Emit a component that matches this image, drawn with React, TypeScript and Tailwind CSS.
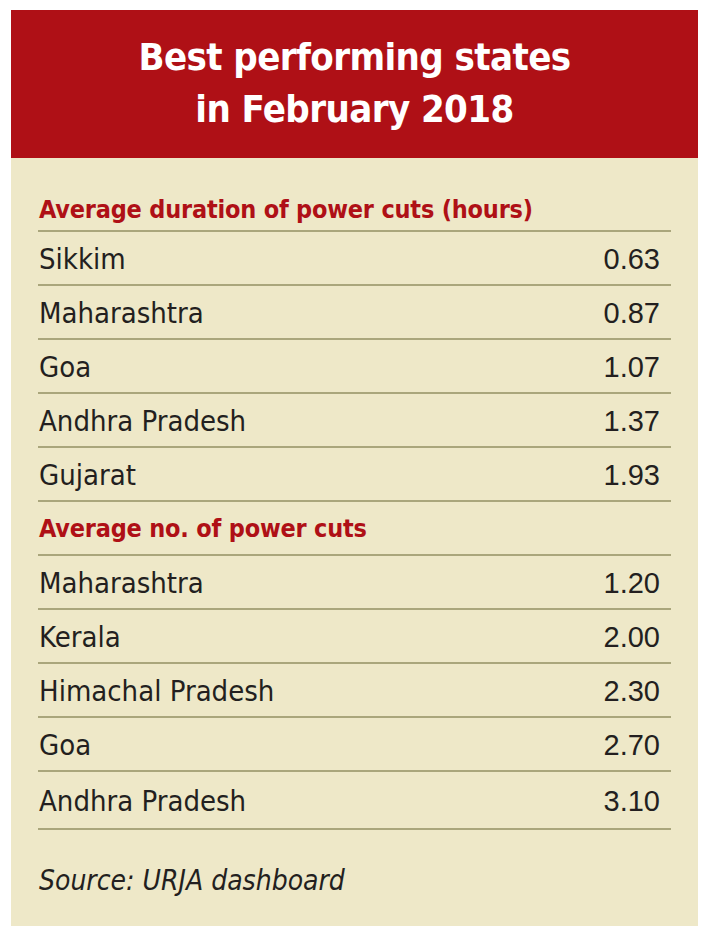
const duration = [
  ["Sikkim", "0.63"],
  ["Maharashtra", "0.87"],
  ["Goa", "1.07"],
  ["Andhra Pradesh", "1.37"],
  ["Gujarat", "1.93"],
];

const cuts = [
  ["Maharashtra", "1.20"],
  ["Kerala", "2.00"],
  ["Himachal Pradesh", "2.30"],
  ["Goa", "2.70"],
  ["Andhra Pradesh", "3.10"],
];

function Row({ name, value, last }: { name: string; value: string; last?: boolean }) {
  return (
    <div
      className={
        "flex items-center justify-between border-b-2 border-[#aaa67c] pl-[1px] pr-[11px] pt-[4px] text-[29px] text-[#231f20] " +
        (last ? "h-[58px]" : "h-[54px]")
      }
    >
      <span>{name}</span>
      <span className="font-[family-name:Liberation_Sans,Arial,sans-serif]">{value}</span>
    </div>
  );
}

export default function App() {
  return (
    <div className="min-h-[940px] bg-white pl-[11px] pr-[18px] pt-[10px] pb-[16px] font-[family-name:DejaVu_Sans_Condensed,Liberation_Sans,sans-serif]">
      <div className="w-[687px] bg-[#eee8c8]">
        <div className="flex h-[148px] flex-col items-center justify-center bg-[#af1016] pb-[2px] text-center text-[38px] font-bold leading-[52px] tracking-[-0.6px] text-white">
          <div>Best performing states</div>
          <div>in February 2018</div>
        </div>
        <div className="px-[27px] pt-[32px] pb-[24px]">
          <div className="flex h-[42px] items-center border-b-2 border-[#aaa67c] pl-[1px] text-[25px] font-bold tracking-[-0.2px] text-[#af1016]">
            Average duration of power cuts (hours)
          </div>
          {duration.map(([n, v]) => (
            <Row key={n} name={n} value={v} />
          ))}
          <div className="flex h-[54px] items-center border-b-2 border-[#aaa67c] pl-[1px] pt-[2px] text-[25px] font-bold tracking-[-0.2px] text-[#af1016]">
            Average no. of power cuts
          </div>
          {cuts.map(([n, v], i) => (
            <Row key={n + v} name={n} value={v} last={i === cuts.length - 1} />
          ))}
          <div className="pl-[1px] pt-[30px] text-[28px] italic text-[#231f20]">Source: URJA dashboard</div>
        </div>
      </div>
    </div>
  );
}
